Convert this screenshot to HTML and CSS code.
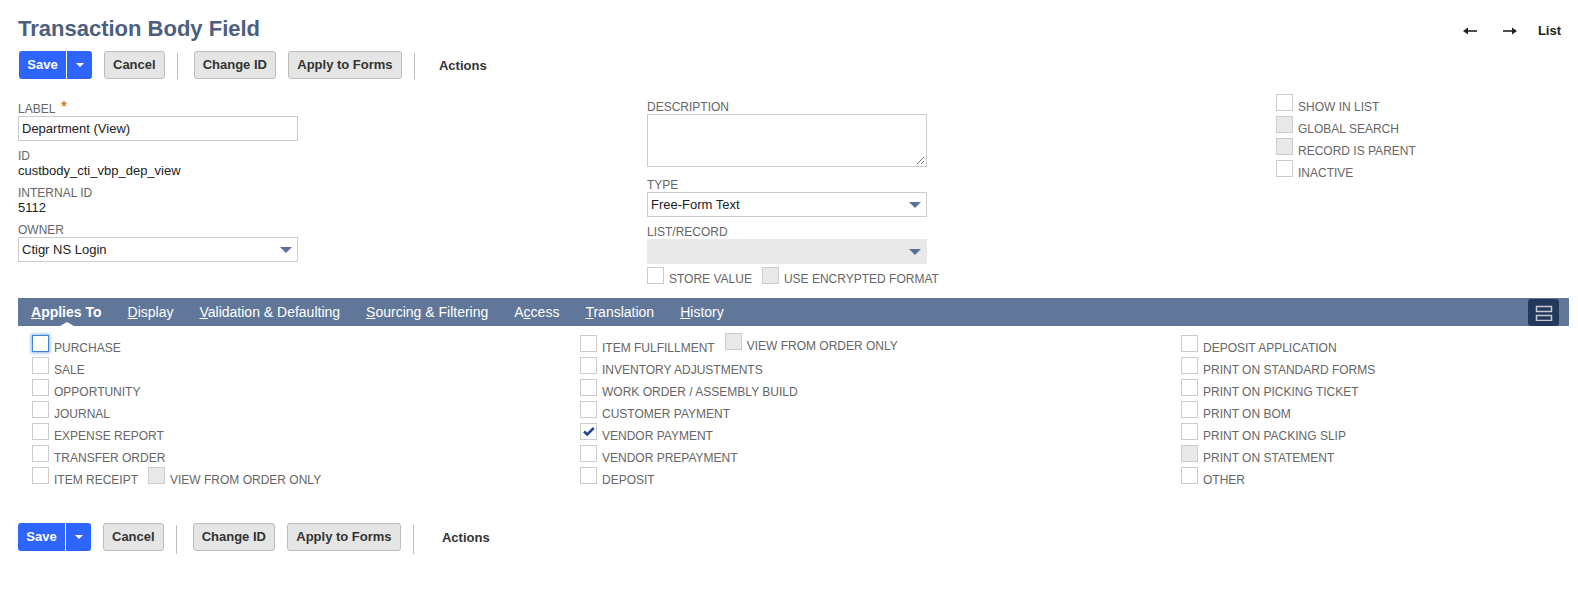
FILE: index.html
```html
<!DOCTYPE html>
<html lang="en">
<head>
  <meta charset="UTF-8" />
  <meta name="viewport" content="width=device-width, initial-scale=1" />
  <title>Transaction Body Field</title>
  <link rel="stylesheet" href="styles.css">
</head>
<body>
  <div class="page-head">
    <h1>Transaction Body Field</h1>
    <div class="record-nav">
      <svg class="nav-arrow" width="14" height="10" viewBox="0 0 14 10"><path d="M14 5H4" fill="none" stroke="#222" stroke-width="1.600"/><path d="M0 5l5-3.500v7z" fill="#222"/></svg>
      <svg class="nav-arrow" width="14" height="10" viewBox="0 0 14 10"><path d="M0 5h10" fill="none" stroke="#222" stroke-width="1.600"/><path d="M14 5 9 1.500v7z" fill="#222"/></svg>
      <a class="nav-list">List</a>
    </div>
  </div>

  <div class="toolbar toolbar-top">
    <div class="save-group">
      <button class="btn-save">Save</button>
      <button class="btn-save-more"><span class="caret-white"></span></button>
    </div>
    <button class="btn">Cancel</button>
    <span class="toolbar-sep"></span>
    <button class="btn">Change ID</button>
    <button class="btn btn-apply">Apply to Forms</button>
    <span class="toolbar-sep"></span>
    <span class="toolbar-actions">Actions</span>
  </div>

  <div class="main-fields">
    <div class="field-col col-left">
      <div class="field-label">LABEL <span class="required">*</span></div>
      <div class="text-input">Department (View)</div>
      <div class="field-label label-gap">ID</div>
      <div class="field-value">custbody_cti_vbp_dep_view</div>
      <div class="field-label label-gap">INTERNAL ID</div>
      <div class="field-value">5112</div>
      <div class="field-label label-gap">OWNER</div>
      <div class="text-input select-input">Ctigr NS Login<span class="caret-blue"></span></div>
    </div>

    <div class="field-col col-mid">
      <div class="field-label">DESCRIPTION</div>
      <div class="textarea-input">
        <svg class="resize-grip" width="9" height="9" viewBox="0 0 9 9"><path d="M1 8 8 1M5 8 8 5" stroke="#777" stroke-width="1"/></svg>
      </div>
      <div class="field-label type-gap">TYPE</div>
      <div class="text-input select-input">Free-Form Text<span class="caret-blue"></span></div>
      <div class="field-label list-gap">LIST/RECORD</div>
      <div class="text-input select-input input-disabled"><span class="caret-blue"></span></div>
      <div class="inline-checks">
        <label class="check-item"><span class="check"></span><span class="check-text">STORE VALUE</span></label>
        <label class="check-item"><span class="check check-disabled"></span><span class="check-text">USE ENCRYPTED FORMAT</span></label>
      </div>
    </div>

    <div class="field-col">
      <label class="check-item"><span class="check"></span><span class="check-text">SHOW IN LIST</span></label>
      <label class="check-item"><span class="check check-disabled"></span><span class="check-text">GLOBAL SEARCH</span></label>
      <label class="check-item"><span class="check check-disabled"></span><span class="check-text">RECORD IS PARENT</span></label>
      <label class="check-item"><span class="check"></span><span class="check-text">INACTIVE</span></label>
    </div>
  </div>

  <div class="tab-bar">
    <a class="tab tab-active"><u>A</u>pplies To</a>
    <a class="tab"><u>D</u>isplay</a>
    <a class="tab"><u>V</u>alidation &amp; Defaulting</a>
    <a class="tab"><u>S</u>ourcing &amp; Filtering</a>
    <a class="tab">A<u>c</u>cess</a>
    <a class="tab"><u>T</u>ranslation</a>
    <a class="tab"><u>H</u>istory</a>
    <button class="view-toggle">
      <svg width="18" height="16" viewBox="0 0 18 16"><path d="M1.500 1.500h15v5h-15zM1.500 10.500h15v5h-15z" fill="none" stroke="#c4c8cf" stroke-width="1.500"/></svg>
    </button>
  </div>

  <div class="applies-grid">
    <div class="applies-col">
      <label class="check-item"><span class="check check-focus"></span><span class="check-text">PURCHASE</span></label>
      <label class="check-item"><span class="check"></span><span class="check-text">SALE</span></label>
      <label class="check-item"><span class="check"></span><span class="check-text">OPPORTUNITY</span></label>
      <label class="check-item"><span class="check"></span><span class="check-text">JOURNAL</span></label>
      <label class="check-item"><span class="check"></span><span class="check-text">EXPENSE REPORT</span></label>
      <label class="check-item"><span class="check"></span><span class="check-text">TRANSFER ORDER</span></label>
      <div class="check-pair">
        <label class="check-item"><span class="check"></span><span class="check-text">ITEM RECEIPT</span></label>
        <label class="check-item"><span class="check check-disabled"></span><span class="check-text">VIEW FROM ORDER ONLY</span></label>
      </div>
    </div>
    <div class="applies-col">
      <div class="check-pair">
        <label class="check-item"><span class="check"></span><span class="check-text">ITEM FULFILLMENT</span></label>
        <label class="check-item item-raised"><span class="check check-disabled"></span><span class="check-text">VIEW FROM ORDER ONLY</span></label>
      </div>
      <label class="check-item"><span class="check"></span><span class="check-text">INVENTORY ADJUSTMENTS</span></label>
      <label class="check-item"><span class="check"></span><span class="check-text">WORK ORDER / ASSEMBLY BUILD</span></label>
      <label class="check-item"><span class="check"></span><span class="check-text">CUSTOMER PAYMENT</span></label>
      <label class="check-item">
        <span class="check">
          <svg class="tick" width="14" height="12" viewBox="0 0 14 12"><path d="M2 6.500 5.200 9.500 11.800 3" fill="none" stroke="#24478f" stroke-width="2.600"/></svg>
        </span><span class="check-text">VENDOR PAYMENT</span>
      </label>
      <label class="check-item"><span class="check"></span><span class="check-text">VENDOR PREPAYMENT</span></label>
      <label class="check-item"><span class="check"></span><span class="check-text">DEPOSIT</span></label>
    </div>
    <div class="applies-col">
      <label class="check-item"><span class="check"></span><span class="check-text">DEPOSIT APPLICATION</span></label>
      <label class="check-item"><span class="check"></span><span class="check-text">PRINT ON STANDARD FORMS</span></label>
      <label class="check-item"><span class="check"></span><span class="check-text">PRINT ON PICKING TICKET</span></label>
      <label class="check-item"><span class="check"></span><span class="check-text">PRINT ON BOM</span></label>
      <label class="check-item"><span class="check"></span><span class="check-text">PRINT ON PACKING SLIP</span></label>
      <label class="check-item"><span class="check check-disabled"></span><span class="check-text">PRINT ON STATEMENT</span></label>
      <label class="check-item"><span class="check"></span><span class="check-text">OTHER</span></label>
    </div>
  </div>

  <div class="toolbar toolbar-bottom">
    <div class="save-group">
      <button class="btn-save">Save</button>
      <button class="btn-save-more"><span class="caret-white"></span></button>
    </div>
    <button class="btn">Cancel</button>
    <span class="toolbar-sep"></span>
    <button class="btn">Change ID</button>
    <button class="btn btn-apply">Apply to Forms</button>
    <span class="toolbar-sep"></span>
    <span class="toolbar-actions">Actions</span>
  </div>
</body>
</html>
```

FILE: styles.css
```css
* {
  box-sizing: border-box;
  margin: 0;
  padding: 0;
}
body {
  background: #fff;
  font-family: 'Liberation Sans', Arial, sans-serif;
  font-size: 13px;
  color: #222;
  height: 602px;
  overflow: hidden;
}
.page-head {
  display: flex;
  justify-content: space-between;
  align-items: flex-start;
  padding: 16px 17px 0 18px;
  height: 51px;
}
h1 {
  font-size: 22px;
  line-height: 26px;
  font-weight: 700;
  color: #4d5f7e;
}
.record-nav {
  display: flex;
  align-items: center;
  gap: 26px;
  padding-top: 7px;
}
.nav-list {
  font-size: 13px;
  font-weight: 700;
  margin-left: -5px;
}

/* toolbars */
.toolbar {
  display: flex;
  align-items: flex-start;
  height: 28px;
}
.toolbar-top {
  padding-left: 19px;
}
.toolbar-bottom {
  padding-left: 18px;
  margin-top: 40px;
}
.save-group {
  display: flex;
  height: 28px;
  width: 73px;
  margin-right: 12px;
  background: #2e65ff;
  border-radius: 3px;
}
.btn-save,
.btn-save-more {
  background: none;
  border: 0;
  color: #fff;
  font: 700 13px 'Liberation Sans', Arial, sans-serif;
}
.btn-save {
  width: 47px;
  padding-bottom: 1px;
}
.btn-save-more {
  flex: 1;
  border-left: 1px solid #fff;
  display: flex;
  align-items: center;
  justify-content: center;
}
.caret-white {
  width: 0;
  height: 0;
  border-left: 4.500px solid transparent;
  border-right: 4.500px solid transparent;
  border-top: 4px solid #fff;
}
.btn {
  height: 28px;
  padding: 0 8px 1px;
  margin-right: 12px;
  background: #e5e5e5;
  border: 1px solid #bdbdbd;
  border-radius: 3px;
  color: #333;
  font: 700 13px 'Liberation Sans', Arial, sans-serif;
}
.btn-apply {
  width: 114px;
}
.toolbar-sep {
  width: 1px;
  height: 26px;
  margin: 2px 16px 0 0;
  background: #bdbdbd;
}
.toolbar-bottom .toolbar-sep {
  height: 29px;
}
.toolbar-actions {
  font-size: 13px;
  font-weight: 700;
  color: #333;
  line-height: 28px;
  margin: 1px 0 0 8px;
}
.toolbar-bottom .toolbar-actions {
  margin: 1px 0 0 12px;
}

/* main fields */
.main-fields {
  display: grid;
  grid-template-columns: 629px 629px 1fr;
  padding: 15px 0 0 18px;
  height: 219px;
}
.col-left {
  padding-top: 6px;
}
.col-mid {
  padding-top: 6px;
}
.field-label {
  font-size: 12px;
  line-height: 14px;
  color: #666;
}
.required {
  color: #c77f0a;
  font-size: 14px;
  font-weight: 700;
  line-height: 12px;
  margin-left: 3px;
  vertical-align: 2px;
}
.field-value {
  line-height: 15px;
  color: #222;
}
.label-gap {
  margin-top: 8px;
}
.text-input {
  position: relative;
  width: 280px;
  height: 25px;
  line-height: 23px;
  padding-left: 3px;
  border: 1px solid #ccc;
  background: #fff;
  color: #222;
}
.input-disabled {
  background: #e9e9e9;
  border-color: #e9e9e9;
}
.caret-blue {
  position: absolute;
  right: 5px;
  top: 9px;
  width: 0;
  height: 0;
  border-left: 6px solid transparent;
  border-right: 6px solid transparent;
  border-top: 6px solid #5a7297;
}
.textarea-input {
  position: relative;
  width: 280px;
  height: 53px;
  border: 1px solid #ccc;
}
.resize-grip {
  position: absolute;
  right: 1px;
  bottom: 1px;
}
.type-gap {
  margin-top: 11px;
}
.list-gap {
  margin-top: 8px;
}
.inline-checks {
  display: flex;
  gap: 10px;
  margin-top: 3px;
}
.inline-checks .check-text {
  margin-top: 5px;
}

/* checkboxes */
.check-item {
  display: flex;
  align-items: flex-start;
  gap: 5px;
  height: 22px;
  font-size: 12px;
  line-height: 14px;
  color: #666;
  white-space: nowrap;
}
.check {
  position: relative;
  flex: none;
  display: block;
  width: 17px;
  height: 17px;
  background: #fff;
  border: 1px solid #ccc;
}
.check-text {
  margin-top: 6px;
}
.check-disabled {
  background: #e9e9e9;
}
.check-focus {
  border-color: #3f82d8;
  box-shadow: 0 0 3px 1px #8ab8ec;
}
.tick {
  position: absolute;
  left: 1px;
  top: 1px;
}
.item-raised {
  margin-top: -2px;
}

/* tabs */
.tab-bar {
  display: flex;
  align-items: center;
  gap: 26px;
  position: relative;
  height: 28px;
  margin: 0 9px 0 18px;
  padding-left: 13px;
  background: #607799;
}
.tab {
  position: relative;
  color: #fff;
  font-size: 14px;
}
.tab-active {
  font-weight: 700;
}
.tab-active::after {
  content: "";
  position: absolute;
  left: 29px;
  bottom: -6px;
  width: 0;
  height: 0;
  border-left: 7px solid transparent;
  border-right: 7px solid transparent;
  border-bottom: 4px solid #fff;
}
.view-toggle {
  position: absolute;
  right: 10px;
  top: 1px;
  display: flex;
  align-items: center;
  justify-content: center;
  width: 31px;
  height: 27px;
  background: #24385b;
  border: 0;
  border-radius: 3px;
}

/* applies to panel */
.applies-grid {
  display: grid;
  grid-template-columns: 548px 601px 1fr;
  padding: 9px 0 0 32px;
  height: 157px;
}
.check-pair {
  display: flex;
  gap: 10px;
}
```
